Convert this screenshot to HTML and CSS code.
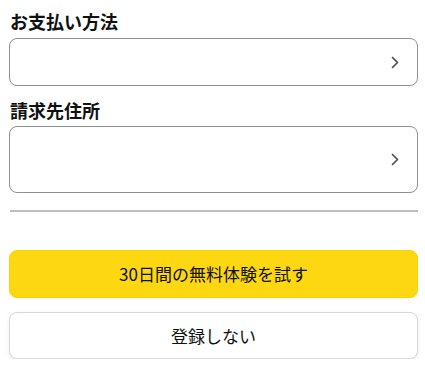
FILE: index.html
```html
<!DOCTYPE html>
<html lang="ja">
<head>
<meta charset="utf-8">
<link rel="stylesheet" href="styles.css">
</head>
<body>
<main class="page">
  <h2 class="label">お支払い方法</h2>
  <div class="field field-short">
    <svg class="chev" width="8" height="13" viewBox="0 0 8 13"><path d="M1.5 1.5 L6.5 6.5 L1.5 11.5" fill="none" stroke="#4a4f4f" stroke-width="1.7" stroke-linecap="round" stroke-linejoin="round"/></svg>
  </div>
  <h2 class="label label-2">請求先住所</h2>
  <div class="field field-tall">
    <svg class="chev" width="8" height="13" viewBox="0 0 8 13"><path d="M1.5 1.5 L6.5 6.5 L1.5 11.5" fill="none" stroke="#4a4f4f" stroke-width="1.7" stroke-linecap="round" stroke-linejoin="round"/></svg>
  </div>
  <hr class="divider">
  <button class="btn btn-primary">30日間の無料体験を試す</button>
  <button class="btn btn-secondary">登録しない</button>
</main>
</body>
</html>
```

FILE: styles.css
```css
html, body {
  margin: 0;
  padding: 0;
  background: #fff;
}
body {
  font-family: "Noto Sans CJK JP", "Noto Sans", sans-serif;
  color: #0f1111;
}
.page {
  display: flex;
  flex-direction: column;
  padding: 8px 7px 0 9px;
}
.label {
  margin: 0;
  font-size: 18px;
  font-weight: 700;
  line-height: 26px;
  padding-left: 1px;
}
.label-2 {
  margin-top: 11px;
}
.field {
  box-sizing: border-box;
  margin-top: 4px;
  border: 1px solid #8d9191;
  border-radius: 8px;
  display: flex;
  align-items: center;
  justify-content: flex-end;
  padding-right: 18px;
}
.field-short { height: 48px; }
.field-tall { height: 67px; margin-top: 3px; }
.chev { display: block; }
.divider {
  margin: 17px 0 0 1px;
  border: 0;
  height: 2px;
  background: #bbbfbf;
}
.btn {
  box-sizing: border-box;
  font-family: "Noto Sans CJK JP", "Noto Sans", sans-serif;
  color: #0f1111;
  width: 100%;
  height: 48px;
  border-radius: 8px;
  font-size: 17px;
  line-height: 24px;
  padding: 0;
}
.btn-primary {
  margin-top: 38px;
  background: #fcd712;
  border: 1px solid #fcd300;
}
.btn-secondary {
  margin-top: 14px;
  height: 47px;
  background: #fff;
  border: 1px solid #d5d9d9;
  box-shadow: 0 2px 4px rgba(213, 217, 217, 0.5);
}
```
